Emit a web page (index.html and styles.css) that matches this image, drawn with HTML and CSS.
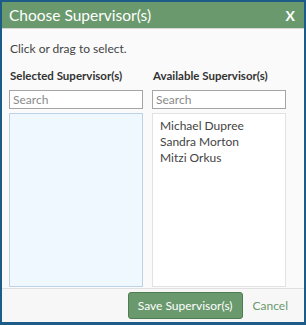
FILE: index.html
```html
<!DOCTYPE html>
<html lang="en">
<head>
    <meta charset="UTF-8">
    <title>Choose Supervisor(s)</title>
    <link rel="stylesheet" href="styles.css">
</head>
<body>
    <div class="dialog">
        <div class="dialog-header">
            <span class="dialog-title">Choose Supervisor(s)</span>
            <span class="close-x">X</span>
        </div>
        <div class="dialog-body">
            <p class="hint">Click or drag to select.</p>
            <div class="columns">
                <div class="column">
                    <div class="column-label">Selected Supervisor(s)</div>
                    <input class="search" type="text" placeholder="Search">
                    <div class="list list-selected"></div>
                </div>
                <div class="column">
                    <div class="column-label">Available Supervisor(s)</div>
                    <input class="search" type="text" placeholder="Search">
                    <div class="list">
                        <div class="list-item">Michael Dupree</div>
                        <div class="list-item">Sandra Morton</div>
                        <div class="list-item">Mitzi Orkus</div>
                    </div>
                </div>
            </div>
        </div>
        <div class="dialog-footer">
            <button class="save-button">Save Supervisor(s)</button>
            <span class="cancel-link">Cancel</span>
        </div>
    </div>
</body>
</html>
```

FILE: styles.css
```css
body {
    margin: 0;
    font-family: Lato, 'Open Sans', sans-serif;
    background-color: #ffffff;
}
.dialog {
    width: 306px;
    height: 325px;
    box-sizing: border-box;
    border: 2px solid #1d5c88;
    border-bottom-width: 3px;
    background-color: #fafafa;
    display: flex;
    flex-direction: column;
}
.dialog-header {
    height: 26px;
    background-color: #6a996d;
    border-bottom: 1px solid #d6d6d6;
    display: flex;
    align-items: center;
    justify-content: space-between;
    padding: 0 9px 0 7px;
    color: #ffffff;
}
.dialog-title {
    font-size: 15.5px;
}
.close-x {
    font-size: 14px;
    font-weight: bold;
}
.dialog-body {
    flex: 1;
    padding: 0 7px;
    display: flex;
    flex-direction: column;
}
.hint {
    margin: 12px 0 0 1px;
    font-size: 12px;
    color: #444444;
}
.columns {
    display: flex;
    gap: 9px;
    margin-top: 13px;
    flex: 1;
}
.column {
    width: 134px;
    display: flex;
    flex-direction: column;
}
.column-label {
    font-size: 11.5px;
    font-weight: bold;
    color: #333333;
    margin-left: 1px;
    height: 14px;
}
.search {
    margin-top: 7px;
    height: 19px;
    box-sizing: border-box;
    border: 1px solid #a5a5a5;
    padding: 0 3px;
    font-family: inherit;
    font-size: 12px;
    background-color: #ffffff;
}
.search::placeholder {
    color: #8a8a8a;
}
.list {
    flex: 1;
    margin-top: 4px;
    margin-bottom: 1px;
    border: 1px solid #e2e2e2;
    background-color: #ffffff;
    padding: 4px 7px;
}
.list-selected {
    background-color: #f0f8ff;
    border-color: #bcd3e6;
}
.list-item {
    font-size: 12px;
    color: #444444;
    line-height: 16px;
}
.dialog-footer {
    height: 33px;
    border-top: 1px solid #e0e0e0;
    background-color: #f7f7f7;
    display: flex;
    align-items: center;
    justify-content: flex-end;
    padding-right: 16px;
    gap: 10px;
}
.save-button {
    height: 27px;
    padding: 0 9px;
    background-color: #6a996d;
    border: 1px solid #4f7d52;
    border-radius: 3px;
    color: #ffffff;
    font-family: inherit;
    font-size: 12px;
}
.cancel-link {
    font-size: 12px;
    color: #6a996d;
}
```
